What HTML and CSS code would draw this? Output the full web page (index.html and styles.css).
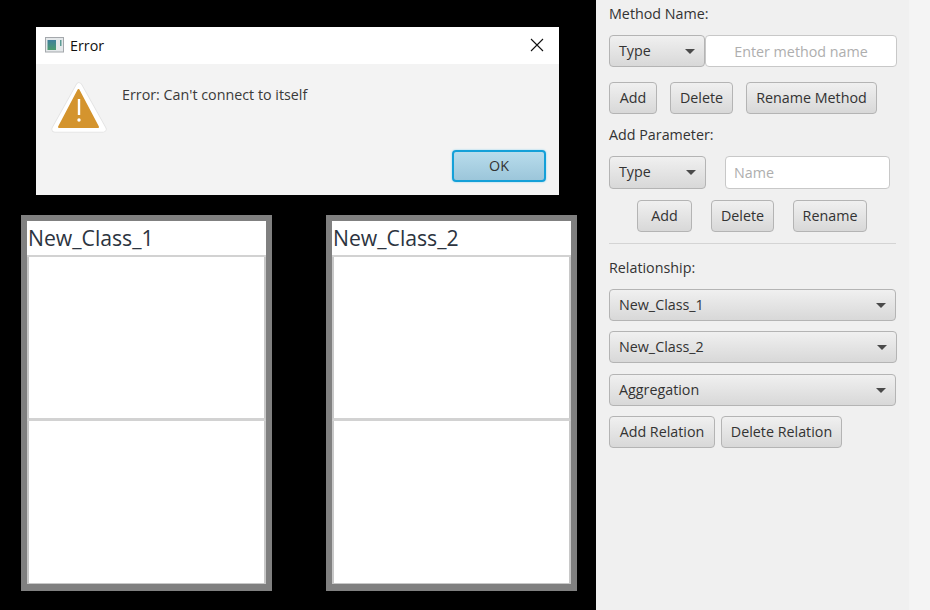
FILE: index.html
```html
<!DOCTYPE html>
<html lang="en">
<head>
  <meta charset="UTF-8" />
  <title>Class Diagram Editor</title>
  <link rel="stylesheet" href="styles.css">
</head>
<body>
  <div class="app">
    <main class="canvas">
      <div class="dialog">
        <div class="dialog-title">
          <svg class="app-icon" width="20" height="16" viewBox="0 0 20 16">
            <defs>
              <linearGradient id="appFill" x1="0" y1="0" x2="0" y2="1">
                <stop offset="0" stop-color="#3f7f9c"/>
                <stop offset="1" stop-color="#4a9a6e"/>
              </linearGradient>
            </defs>
            <rect x="0.5" y="0.5" width="18" height="14.5" fill="#e4e8ea" stroke="#a4a8ac"/>
            <rect x="2.500" y="3" width="8.500" height="10" fill="url(#appFill)"/>
            <rect x="15" y="3" width="1.5" height="6" fill="#5c9c94"/>
          </svg>
          <span class="dialog-name">Error</span>
          <svg class="close-icon" width="14" height="14" viewBox="0 0 14 14">
            <path d="M1 1 L13 13 M13 1 L1 13" stroke="#111" stroke-width="1.1" fill="none"/>
          </svg>
        </div>
        <div class="dialog-body">
          <svg class="warn-icon" width="56" height="54" viewBox="0 0 56 54">
            <path d="M28 5 L52 48 H4 Z" fill="#e2e2e2" stroke="#e2e2e2" stroke-width="7" stroke-linejoin="round"/>
            <path d="M28 5 L52 48 H4 Z" fill="#fff" stroke="#fff" stroke-width="5.500" stroke-linejoin="round"/>
            <path d="M27.500 9 L47 46 H8 Z" fill="#d4942e" stroke="#d4942e" stroke-width="2" stroke-linejoin="round"/>
            <rect x="26.800" y="18" width="2.400" height="16" fill="#fff"/>
            <circle cx="28" cy="39" r="1.700" fill="#fff"/>
          </svg>
          <p class="dialog-msg">Error: Can't connect to itself</p>
          <button class="btn btn-ok">OK</button>
        </div>
      </div>

      <div class="class-box box-one">
        <div class="class-name">New_Class_1</div>
        <div class="class-part part-fields"></div>
        <div class="class-part part-methods"></div>
      </div>
      <div class="class-box box-two">
        <div class="class-name">New_Class_2</div>
        <div class="class-part part-fields"></div>
        <div class="class-part part-methods"></div>
      </div>
    </main>

    <aside class="panel">
      <div class="panel-label label-method">Method Name:</div>
      <div class="row row-method">
        <div class="combo combo-type"><span>Type</span><i class="arrow"></i></div>
        <input class="field field-method" type="text" placeholder="Enter method name" />
      </div>
      <div class="row row-method-btns">
        <button class="btn w-add">Add</button>
        <button class="btn w-delete">Delete</button>
        <button class="btn w-rename-method">Rename Method</button>
      </div>

      <div class="panel-label label-param">Add Parameter:</div>
      <div class="row row-param">
        <div class="combo combo-type-param"><span>Type</span><i class="arrow"></i></div>
        <input class="field field-param" type="text" placeholder="Name" />
      </div>
      <div class="row row-param-btns">
        <button class="btn w-add-param">Add</button>
        <button class="btn w-delete">Delete</button>
        <button class="btn w-rename">Rename</button>
      </div>

      <hr class="divider" />

      <div class="panel-label label-rel">Relationship:</div>
      <div class="combo combo-wide"><span>New_Class_1</span><i class="arrow"></i></div>
      <div class="combo combo-wide combo-second"><span>New_Class_2</span><i class="arrow"></i></div>
      <div class="combo combo-wide combo-third"><span>Aggregation</span><i class="arrow"></i></div>
      <div class="row row-rel-btns">
        <button class="btn w-add-rel">Add Relation</button>
        <button class="btn w-del-rel">Delete Relation</button>
      </div>
    </aside>
  </div>
</body>
</html>
```

FILE: styles.css
```css
* {
  box-sizing: border-box;
}
html, body {
  margin: 0;
  height: 100%;
  overflow: hidden;
}
body {
  font-family: "Open Sans", "Noto Sans", sans-serif;
  font-size: 14.3px;
  color: #333;
  background: #f4f4f4;
}
.app {
  display: flex;
  width: 930px;
  height: 610px;
}

/* canvas */
.canvas {
  position: relative;
  width: 596px;
  background: #000;
}
.dialog {
  position: absolute;
  left: 36px;
  top: 27px;
  width: 523px;
  height: 168px;
  background: #f3f3f3;
  display: flex;
  flex-direction: column;
}
.dialog-title {
  height: 37px;
  background: #fff;
  display: flex;
  align-items: center;
  padding: 0 15px 1px 9px;
  color: #111;
}
.app-icon {
  margin-right: 5px;
}
.dialog-name {
  flex: 1;
}
.dialog-body {
  position: relative;
  flex: 1;
}
.warn-icon {
  position: absolute;
  left: 15px;
  top: 17px;
}
.dialog-msg {
  margin: 0;
  position: absolute;
  left: 86px;
  top: 21px;
  color: #3a3a3a;
}
.btn-ok {
  position: absolute;
  left: 416px;
  top: 86px;
  width: 94px;
  height: 32px;
  background: linear-gradient(#b8dcec, #9cc6da);
  border: 2px solid #14a0d8;
  box-shadow: 0 0 2px #7fcdee;
}
.class-box {
  position: absolute;
  top: 215px;
  width: 251px;
  height: 376px;
  border: 6px solid #808080;
  border-bottom-width: 7px;
  background: #fff;
  display: flex;
  flex-direction: column;
}
.box-one {
  left: 21px;
}
.box-two {
  left: 326px;
}
.class-name {
  height: 36px;
  padding-left: 1px;
  font-size: 21.2px;
  line-height: 34px;
  color: #2c3440;
  border-bottom: 2px solid #d2d2d2;
}
.class-part {
  border: 2px solid #c8c8c8;
  border-top: 0;
  border-bottom: 0;
}
.part-fields {
  height: 164px;
  border-bottom: 3px solid #d2d2d2;
}
.part-methods {
  flex: 1;
  border-bottom: 1px solid #c8c8c8;
}

/* right panel */
.panel {
  width: 313px;
  background: #f0f0f0;
  padding-left: 13px;
  display: flex;
  flex-direction: column;
  align-items: flex-start;
}
.panel-label {
  line-height: 20px;
  color: #333;
}
.label-method {
  margin-top: 4px;
}
.label-param {
  margin-top: 11px;
}
.label-rel {
  margin-top: 14px;
}
.row {
  display: flex;
}
.row-method {
  margin-top: 11px;
}
.row-method-btns {
  margin-top: 15px;
  gap: 13px;
}
.row-param {
  margin-top: 11px;
  gap: 19px;
}
.row-param-btns {
  margin-top: 11px;
  margin-left: 28px;
  gap: 19px;
}
.row-rel-btns {
  margin-top: 10px;
  gap: 6px;
}
.divider {
  width: 287px;
  margin: 11px 0 0;
  border: 0;
  border-top: 1px solid #d4d4d4;
}

.btn, .combo {
  font-family: inherit;
  font-size: 14.3px;
  color: #333;
  height: 32px;
  padding: 0 0 2px;
  border-radius: 4px;
}
.btn:not(.btn-ok), .combo {
  background: linear-gradient(#f0f0f0, #d8d8d8);
  border: 1px solid #b4b4b4;
}
.w-add { width: 48px; }
.w-delete { width: 63px; }
.w-rename-method { width: 131px; }
.w-add-param { width: 55px; }
.w-rename { width: 74px; }
.w-add-rel { width: 106px; }
.w-del-rel { width: 121px; }

.combo {
  display: flex;
  align-items: center;
  justify-content: space-between;
  padding: 0 9px 2px;
}
.combo-type {
  width: 96px;
}
.combo-type-param {
  width: 97px;
  height: 33px;
}
.combo-wide {
  width: 287px;
  margin-top: 11px;
}
.combo-second {
  width: 288px;
  margin-top: 10px;
}
.combo-third {
  margin-top: 11px;
}
.arrow {
  width: 0;
  height: 0;
  margin-top: 2px;
  border-left: 5px solid transparent;
  border-right: 5px solid transparent;
  border-top: 5px solid #4a4a4a;
}
.field {
  height: 32px;
  border: 1px solid #c8c8c8;
  border-radius: 4px;
  background: #fff;
  font-family: inherit;
  font-size: 14.3px;
  outline: none;
}
.field::placeholder {
  color: #aeaeae;
  opacity: 1;
}
.field-method {
  width: 192px;
  text-align: center;
  padding: 0 9px;
}
.field-param {
  width: 165px;
  height: 33px;
  padding: 0 8px;
}
```
